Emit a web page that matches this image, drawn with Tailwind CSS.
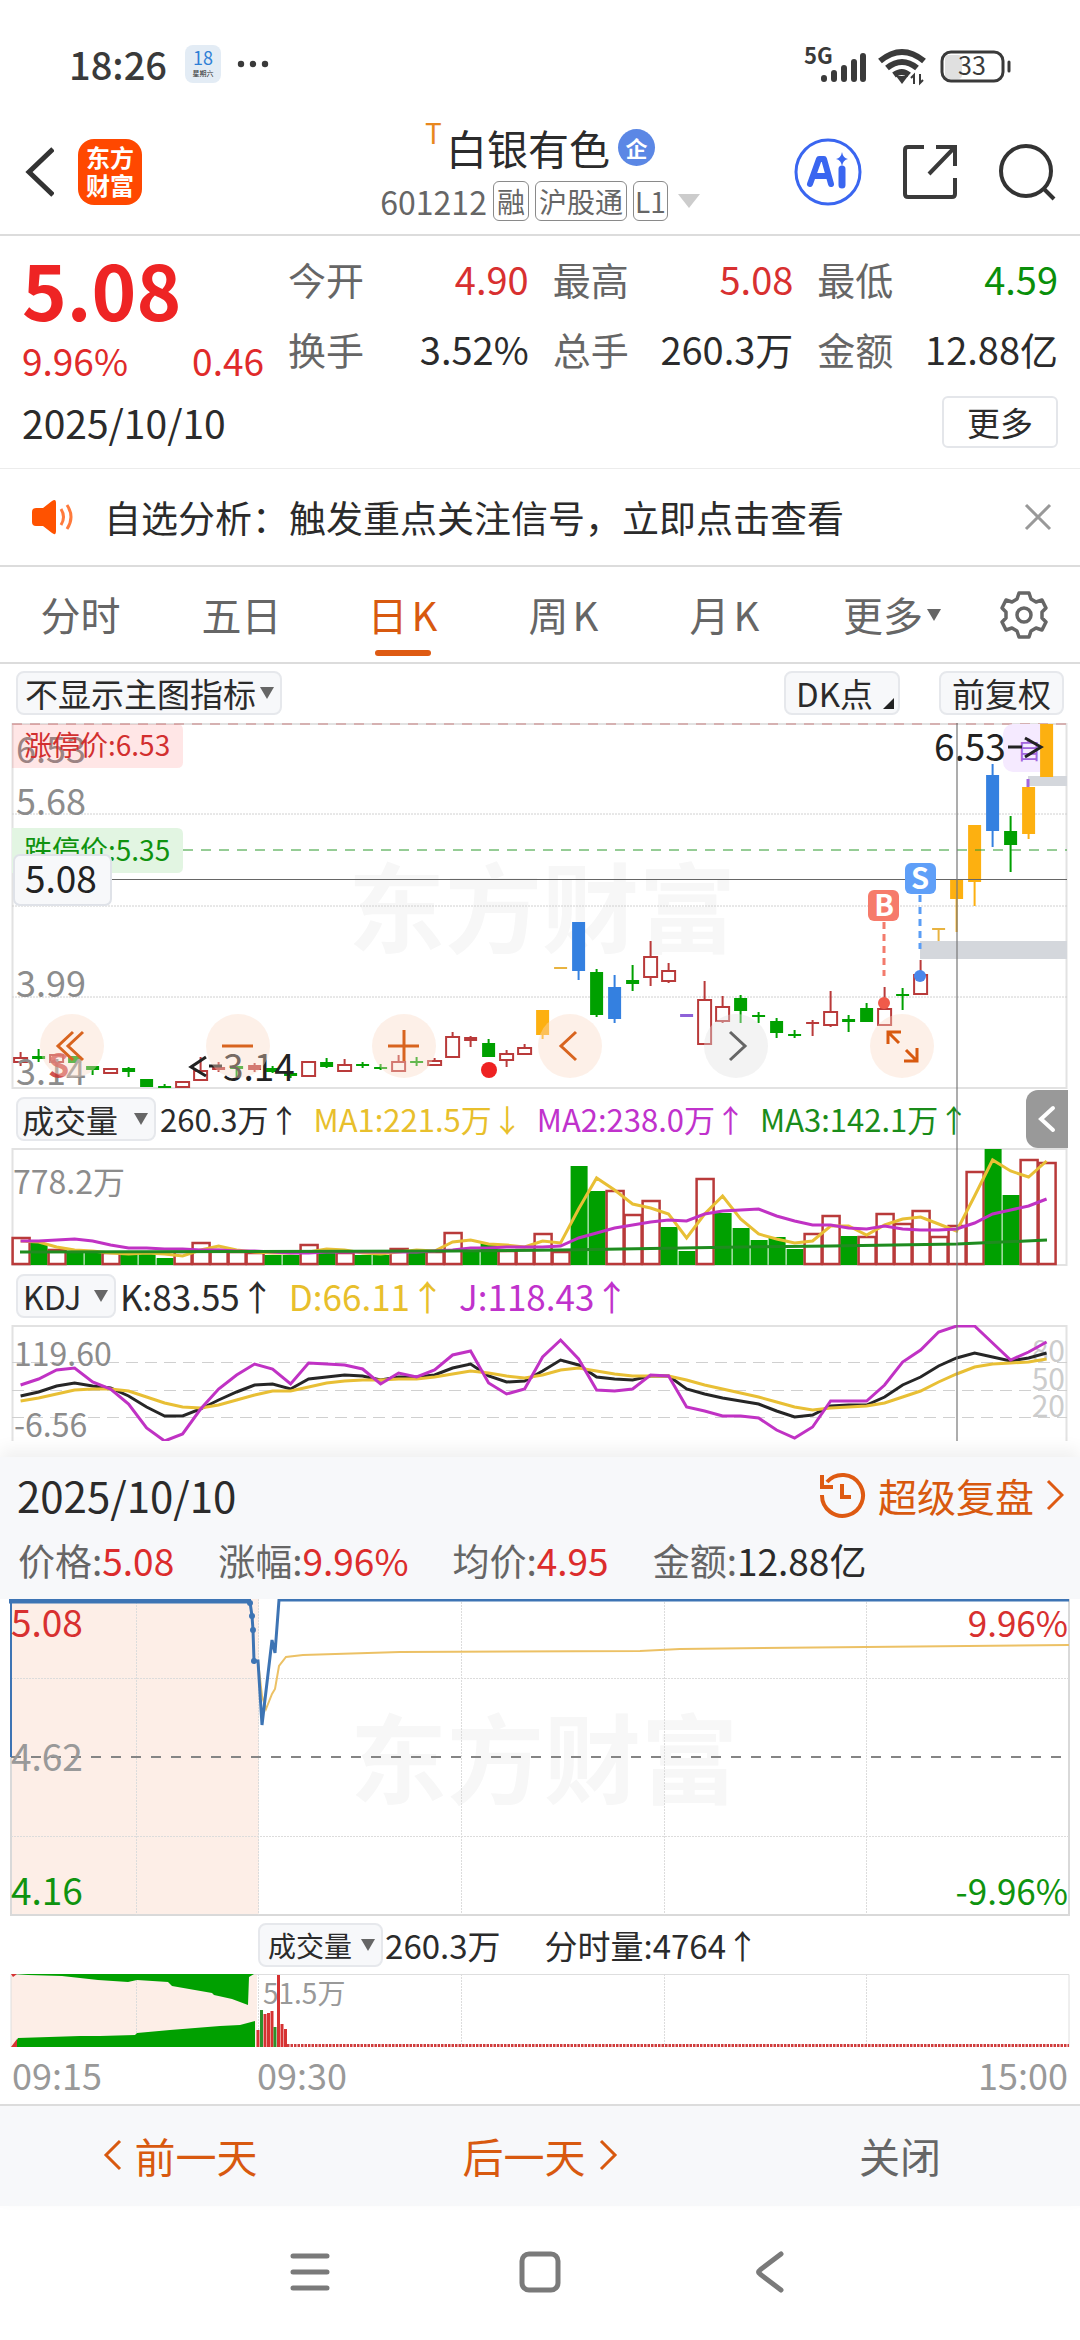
<!DOCTYPE html>
<html lang="zh-CN">
<head>
    <meta charset="UTF-8">
    <meta name="viewport" content="width=device-width, initial-scale=1.0">
    <title>白银有色 601212</title>
    <script src="https://cdn.jsdelivr.net/npm/@tailwindcss/browser@4"></script>
</head>
<body class="bg-white text-[#2b2b2b] font-['Noto_Sans_CJK_SC',sans-serif]">

    <!-- Status bar -->
    <div class="flex items-center justify-between pl-[69px] pr-[68px] pt-[34px] pb-6">
        <div class="flex items-center">
            <span class="text-[38px] leading-[60px] font-medium text-[#3a3a3a]">18:26</span>
            <div class="ml-[18px] w-9 h-[38px] rounded-lg bg-[#e3ecf5] text-center">
                <div class="text-[18px] leading-[24px] text-[#2f7fd6]">18</div>
                <div class="text-[7px] leading-[8px]">星期六</div>
            </div>
            <svg class="ml-4 w-8 h-2" viewBox="0 0 32 8" fill="#3a3a3a"><circle cx="4" cy="4" r="3.2"/><circle cx="16" cy="4" r="3.2"/><circle cx="28" cy="4" r="3.2"/></svg>
        </div>
        <svg class="w-[208px] h-11" viewBox="804 42 208 44" fill="none">
            <text x="804" y="64" font-size="22" font-weight="700" fill="#3a3a3a">5G</text>
            <g stroke="#3a3a3a" stroke-width="6" stroke-linecap="round">
                <path d="M824 79v-1M834 79v-6M844 79v-11M854 79v-17M863 79v-23"/>
            </g>
            <g stroke="#3a3a3a" stroke-width="6" fill="none">
                <path d="M880 61q22-18 44 0M887 68q15-12 30 0M894 75q8-6 15 0"/>
            </g>
            <path d="M896 76h12l-6 8z" fill="#3a3a3a"/>
            <path d="M914 84v-9l-3 3M920 74v9l3-3" stroke="#3a3a3a" stroke-width="2"/>
            <rect x="945" y="55" width="17" height="24" rx="4" fill="#e0e0e0"/>
            <rect x="942" y="52" width="61" height="29" rx="9" stroke="#3a3a3a" stroke-width="3"/>
            <path d="M1009 62v9" stroke="#3a3a3a" stroke-width="3" stroke-linecap="round"/>
            <text x="972" y="75" font-size="25" text-anchor="middle" fill="#3a3a3a">33</text>
        </svg>
    </div>

    <!-- Title bar -->
    <header class="flex items-center justify-between border-b-2 border-[#dcdcdc] pl-6 pr-6 pb-2">
        <div class="flex items-center gap-6 w-[260px]">
            <button type="button" aria-label="返回">
                <svg class="w-[30px] h-14" viewBox="0 0 30 56" fill="none" stroke="#333" stroke-width="5"><path d="M29 5L5 28l24 23"/></svg>
            </button>
            <div class="w-16 h-[66px] rounded-2xl bg-[#ff4800] text-white font-bold text-[24px] leading-[28px] text-center pt-1">东方<br>财富</div>
        </div>
        <div class="flex flex-col items-center">
            <div class="flex items-center">
                <span class="text-[28px] leading-[28px] text-[#e8871e] self-start">T</span>
                <h1 class="ml-1 text-[41px] leading-[58px]">白银有色</h1>
                <span class="ml-2 w-[37px] h-[37px] rounded-full bg-[#5b87e5] text-white text-[22px] leading-[36px] font-bold text-center">企</span>
            </div>
            <div class="flex items-center gap-[6px] text-[28px] leading-[38px] text-[#666]">
                <span class="text-[32px] leading-[50px]">601212</span>
                <span class="border border-[#8a8a8a] rounded-md px-[3px]">融</span>
                <span class="border border-[#8a8a8a] rounded-md px-[3px]">沪股通</span>
                <span class="border border-[#8a8a8a] rounded-md px-[1px]">L1</span>
                <svg class="ml-1 w-[22px] h-4" viewBox="0 0 22 16" fill="#ccc"><path d="M0 1h22L11 15z"/></svg>
            </div>
        </div>
        <div class="flex items-center justify-end gap-10 w-[260px]">
            <button type="button" aria-label="AI">
                <svg class="w-[68px] h-[68px]" viewBox="0 0 68 68" fill="none">
                    <circle cx="34" cy="34" r="32" stroke="#3a66f0" stroke-width="3"/>
                    <path d="M16 46L25 21h5l7 25M20 38h13" stroke="#3a66f0" stroke-width="6" stroke-linecap="round" stroke-linejoin="round"/>
                    <path d="M48 31v16" stroke="#3a66f0" stroke-width="7" stroke-linecap="round"/>
                    <path d="M48 14q1 6 6 7q-5 1-6 7q-1-6-6-7q5-1 6-7z" fill="#3a66f0"/>
                </svg>
            </button>
            <button type="button" aria-label="分享">
                <svg class="w-14 h-14" viewBox="0 0 56 56" fill="none" stroke="#3a3a3a" stroke-width="4"><path d="M22 3H6q-3 0-3 3v44q0 3 3 3h44q3 0 3-3V34M34 3h19v19M53 3L27 30"/></svg>
            </button>
            <button type="button" aria-label="搜索">
                <svg class="w-[58px] h-[58px]" viewBox="0 0 58 58" fill="none" stroke="#333" stroke-width="4"><circle cx="28" cy="28" r="25"/><path d="M46 46l10 10"/></svg>
            </button>
        </div>
    </header>

    <!-- Quote -->
    <section class="border-b border-[#ececec] px-[22px] pt-1 pb-5">
        <div class="flex gap-6">
            <div class="w-[242px] text-[#e02a2a]">
                <div class="text-[76px] leading-[96px] font-bold text-[#ee2424]">5.08</div>
                <div class="flex justify-between text-[37px] leading-[48px]"><span>9.96%</span><span>0.46</span></div>
            </div>
            <dl class="flex-1 grid grid-cols-3 gap-x-6 pt-1 text-[38px] leading-[70px] text-[#666] whitespace-nowrap">
                <div class="flex justify-between"><dt>今开</dt><dd class="text-[#d83030]">4.90</dd></div>
                <div class="flex justify-between"><dt>最高</dt><dd class="text-[#d83030]">5.08</dd></div>
                <div class="flex justify-between"><dt>最低</dt><dd class="text-[#0a8f0a]">4.59</dd></div>
                <div class="flex justify-between"><dt>换手</dt><dd class="text-[#2b2b2b]">3.52%</dd></div>
                <div class="flex justify-between"><dt>总手</dt><dd class="text-[#2b2b2b]">260.3万</dd></div>
                <div class="flex justify-between"><dt>金额</dt><dd class="text-[#2b2b2b]">12.88亿</dd></div>
            </dl>
        </div>
        <div class="flex items-center justify-between mt-3">
            <span class="text-[39px] leading-[50px]">2025/10/10</span>
            <button type="button" class="border-2 border-[#e4e6ea] rounded-md px-[23px] text-[33px] leading-[48px]">更多</button>
        </div>
    </section>

    <!-- Notice -->
    <section class="flex items-center border-b-2 border-[#dcdcdc] pl-8 pr-7">
        <svg class="w-11 h-9" viewBox="0 0 44 36"><path d="M0 13q0-4 4-4h7L20 2q4-3 4 2v28q0 5-4 2l-9-7H4q-4 0-4-4z" fill="#ff5200"/><path d="M29 10q5 8 0 16M35 6q8 12 0 24" fill="none" stroke="#ff7a3c" stroke-width="3"/></svg>
        <a href="#" class="flex-1 ml-7 text-[37px] leading-[96px]">自选分析：触发重点关注信号，立即点击查看</a>
        <button type="button" aria-label="关闭提示">
            <svg class="w-7 h-7" viewBox="0 0 28 28" stroke="#999" stroke-width="3"><path d="M2 2l24 24M26 2L2 26"/></svg>
        </button>
    </section>

    <!-- Period tabs -->
    <nav class="grid grid-cols-[161fr_161fr_161fr_161fr_161fr_170fr_97fr] border-b-2 border-[#dcdcdc] pr-2 text-[40px] leading-[95px] text-[#666]">
        <button type="button">分时</button>
        <button type="button">五日</button>
        <button type="button" class="relative text-[#d8590f]">日<span class="ml-1">K</span><span class="absolute bottom-[6px] left-1/2 -translate-x-1/2 w-14 h-[6px] rounded-full bg-[#de5a12]"></span></button>
        <button type="button">周<span class="ml-1">K</span></button>
        <button type="button">月<span class="ml-1">K</span></button>
        <button type="button" class="flex items-center justify-center gap-1 pl-1">更多<svg class="w-[14px] h-3" viewBox="0 0 14 12" fill="#666"><path d="M0 0h14L7 12z"/></svg></button>
        <button type="button" aria-label="设置" class="flex items-center justify-center">
            <svg class="w-12 h-12" viewBox="0 0 48 48" fill="none" stroke="#666" stroke-width="3.5" stroke-linejoin="round"><path d="M19 2h10l2 6 5 3 6-2 4 8-4 4v6l4 4-4 8-6-2-5 3-2 6H19l-2-6-5-3-6 2-4-8 4-4v-6l-4-4 4-8 6 2 5-3z"/><circle cx="24" cy="24" r="7"/></svg>
        </button>
    </nav>

    <main class="relative pb-4">
        <div class="flex items-center px-4 pt-[7px] pb-2">
            <label class="relative flex items-center">
                <select aria-label="主图指标" class="appearance-none border-2 border-[#e6e8ec] rounded-lg bg-[#f7f8fa] pl-[7px] pr-6 text-[33px] leading-[40px]"><option>不显示主图指标</option></select>
                <svg class="absolute right-2 w-[14px] h-3 pointer-events-none" viewBox="0 0 14 12" fill="#666"><path d="M0 0h14L7 12z"/></svg>
            </label>
            <button type="button" class="ml-auto mr-[39px] flex items-center border-2 border-[#e6e8ec] rounded-lg bg-[#f7f8fa] pl-[10px] pr-1 text-[33px] leading-[40px]">DK点<svg class="ml-[10px] w-[11px] h-[11px] self-end mb-1" viewBox="0 0 11 11"><path d="M11 0v11H0z" fill="#222"/></svg></button>
            <button type="button" class="border-2 border-[#e6e8ec] rounded-lg bg-[#f7f8fa] px-[11px] text-[33px] leading-[40px]">前复权</button>
        </div>

        <!-- Daily candles -->
        <div class="relative">
            <svg class="block w-full" viewBox="0 0 1080 366" fill="none">
                <text x="348" y="222" font-size="97" font-weight="700" fill="#f7f7f7">东方财富</text>
                <rect x="12.5" y="1" width="1054" height="364" stroke="#e2e2e2" stroke-width="2"/>
                <path d="M12 91h1055M12 183h1055M12 274h1055" stroke="#d0d0d0" stroke-dasharray="2 1"/>
                <path d="M12 1h1055" stroke="#c98080" stroke-dasharray="10 8"/>
                <path d="M920 227h147" stroke="#d4d7dc" stroke-width="18"/>
                <path d="M1028 58h39" stroke="#d4d7dc" stroke-width="10"/>
                <rect x="1003" y="1" width="50" height="48" rx="10" fill="#f5eaff"/>
                <text x="1017" y="36" font-size="24" fill="#a266dd">自</text>
                <g id="candles"></g>
                <path d="M1028 56v8" stroke="#a266dd" stroke-width="3"/>
                <circle cx="489" cy="347" r="8" fill="#ee2222"/>

                <g font-size="36" fill="#8c8c8c">
                    <text x="16" y="40">6.53</text>
                    <text x="16" y="92">5.68</text>
                    <text x="16" y="183">4.84</text>
                    <text x="16" y="274">3.99</text>
                    <text x="16" y="362">3.14</text>
                </g>
                <text x="48" y="355" font-size="34" font-weight="700" fill="#c83232" fill-opacity=".85">S</text>
                <path d="M12 1h165q6 0 6 6v32q0 6-6 6H12z" fill="#ff5050" fill-opacity=".14"/>
                <text x="24" y="33" font-size="28" fill="#d22f2f">涨停价:6.53</text>
                <path d="M12 105h165q6 0 6 6v33q0 6-6 6H12z" fill="#e2f5e2"/>
                <text x="24" y="138" font-size="28" fill="#0f930f">跌停价:5.35</text>
                <path d="M183 127h884" stroke="#2c9a2c" stroke-dasharray="10 8"/>
                <path d="M111 156.500h956" stroke="#666"/>
                <rect x="14" y="132" width="97" height="50" rx="6" fill="#f7f8fa" stroke="#dfe2e8" stroke-width="2"/>
                <text x="25" y="170" font-size="37" fill="#222">5.08</text>

                <g stroke-width="3" stroke-dasharray="7 5">
                    <path d="M884 199v54" stroke="#f37b6c"/>
                    <path d="M920 172v54" stroke="#5a9df5"/>
                </g>
                <rect x="868" y="167" width="31" height="31" rx="6" fill="#f67b6b"/>
                <rect x="905" y="140" width="31" height="31" rx="6" fill="#5f9ff8"/>
                <g font-size="29" font-weight="700" fill="#fff" text-anchor="middle">
                    <text x="884" y="193">B</text>
                    <text x="920" y="166">S</text>
                </g>
                <circle cx="884" cy="280" r="6" fill="#f05a4a"/>
                <circle cx="920" cy="253" r="6" fill="#4a86ea"/>

                <g font-size="37" fill="#222">
                    <text x="934" y="38">6.53</text>
                    <text x="223" y="358">3.14</text>
                </g>
                <path d="M1008 24h14M1025 15l16 9-16 10M222 343h-13M206 334l-15 10 15 9" stroke="#222" stroke-width="3"/>
            </svg>
            <div class="absolute inset-x-0 bottom-[11px] flex justify-between pl-10 pr-[146px]">
                <button type="button" aria-label="最早" class="w-16 h-16 rounded-full bg-[#fbd9c6]/40"><svg viewBox="0 0 64 64" fill="none" stroke="#d8641f" stroke-width="3"><path d="M33 18L18 32l15 14M43 18L28 32l15 14"/></svg></button>
                <button type="button" aria-label="缩小" class="w-16 h-16 rounded-full bg-[#fbd9c6]/40"><svg viewBox="0 0 64 64" fill="none" stroke="#d8641f" stroke-width="3"><path d="M16 32h31"/></svg></button>
                <button type="button" aria-label="放大" class="w-16 h-16 rounded-full bg-[#fbd9c6]/40"><svg viewBox="0 0 64 64" fill="none" stroke="#d8641f" stroke-width="3"><path d="M16 32h31M32 16v31"/></svg></button>
                <button type="button" aria-label="左移" class="w-16 h-16 rounded-full bg-[#fbd9c6]/40"><svg viewBox="0 0 64 64" fill="none" stroke="#d8641f" stroke-width="3"><path d="M38 18L23 32l15 14"/></svg></button>
                <button type="button" aria-label="右移" class="w-16 h-16 rounded-full bg-[#e0e0e0]/40"><svg viewBox="0 0 64 64" fill="none" stroke="#666" stroke-width="3"><path d="M26 18l15 14-15 14"/></svg></button>
                <button type="button" aria-label="全屏" class="w-16 h-16 rounded-full bg-[#fbd9c6]/40"><svg viewBox="0 0 64 64" fill="none" stroke="#d8590f" stroke-width="3"><path d="M18 30V18h13M18 18l11 11M47 34v13H34M47 47L36 36"/></svg></button>
            </div>
        </div>

        <!-- Volume -->
        <div class="flex items-center gap-[14px] pl-4 text-[31px] leading-[59px] whitespace-nowrap">
            <label class="relative flex items-center">
                <select aria-label="副图一" class="appearance-none border-2 border-[#e6e8ec] rounded-lg bg-[#f7f8fa] pl-[4px] pr-[35px] text-[32px] leading-[40px]"><option>成交量</option></select>
                <svg class="absolute right-2 w-[14px] h-3 pointer-events-none" viewBox="0 0 14 12" fill="#666"><path d="M0 0h14L7 12z"/></svg>
            </label>
            <span class="-ml-[10px]">260.3万↑</span>
            <span class="text-[#e8bf2c]">MA1:221.5万↓</span>
            <span class="text-[#c032cc]">MA2:238.0万↑</span>
            <span class="text-[#1a8c1a]">MA3:142.1万↑</span>
            <button type="button" aria-label="展开" class="ml-auto mr-[12px] w-[42px] h-[58px] rounded-l-xl bg-[#999] flex items-center justify-center">
                <svg class="w-5 h-8" viewBox="0 0 20 32" fill="none" stroke="#fff" stroke-width="4" stroke-linecap="round"><path d="M16 5L4 16l12 11"/></svg>
            </button>
        </div>
        <svg class="block w-full" viewBox="0 0 1080 118" fill="none">
            <rect x="12.500" y="1" width="1054" height="116" stroke="#e2e2e2" stroke-width="2"/>
            <text x="13" y="46" font-size="32" fill="#8c8c8c">778.2万</text>
            <g id="volumes"></g>
            <polyline id="ma1" stroke="#e8bf35" stroke-width="3"/>
            <polyline id="ma2" stroke="#c032c4" stroke-width="3"/>
            <polyline points="20,104 453,103 561,102 741,99 831,98 957,96 1047,92" stroke="#1f8c1f" stroke-width="3"/>
        </svg>

        <!-- KDJ -->
        <div class="flex items-center gap-[14px] pl-4 text-[35px] leading-[59px] whitespace-nowrap">
            <label class="relative flex items-center">
                <select aria-label="副图二" class="appearance-none border-2 border-[#e6e8ec] rounded-lg bg-[#f7f8fa] pl-[5px] pr-8 text-[32px] leading-[40px]"><option>KDJ</option></select>
                <svg class="absolute right-2 w-[14px] h-3 pointer-events-none" viewBox="0 0 14 12" fill="#666"><path d="M0 0h14L7 12z"/></svg>
            </label>
            <span class="-ml-[10px]">K:83.55↑</span>
            <span class="text-[#e8bf2c]">D:66.11↑</span>
            <span class="text-[#c032cc]">J:118.43↑</span>
        </div>
        <svg class="block w-full" viewBox="0 0 1080 116" fill="none">
            <path d="M12.500 116V1h1054v115" stroke="#e2e2e2" stroke-width="2"/>
            <path d="M12 37.500h1055M12 65.500h1055M12 92.500h1055" stroke="#d0d0d0" stroke-dasharray="12 7"/>
            <g font-size="32" fill="#8c8c8c"><text x="14" y="41">119.60</text><text x="14" y="112">-6.56</text></g>
            <g font-size="30" fill="#ccc" text-anchor="end"><text x="1065" y="37">80</text><text x="1065" y="65">50</text><text x="1065" y="92">20</text></g>
            <polyline id="k" stroke="#262626" stroke-width="3"/>
            <polyline id="d" stroke="#e8bf35" stroke-width="3"/>
            <polyline id="j" stroke="#c032c4" stroke-width="3"/>
        </svg>
        <div class="absolute left-[88.5%] top-[59px] bottom-4 w-[2px] bg-[#777]/60"></div>
    </main>

    <!-- Replay of one day -->
    <section class="relative bg-[#f7f8fa] shadow-[0_-8px_16px_rgba(0,0,0,0.06)]">
        <div class="flex items-center justify-between pl-[17px] pr-4 pt-1">
            <h2 class="text-[42px] leading-[68px]">2025/10/10</h2>
            <a href="#" class="flex items-center text-[39px] leading-[68px] text-[#d8590f]">
                <svg class="w-12 h-12 mr-3" viewBox="0 0 48 48" fill="none" stroke="#de5a12" stroke-width="4"><path d="M4 24a20.500 20.500 0 1 0 5-13M4 4v12h11M24 13v13h9"/></svg>超级复盘
                <svg class="w-[18px] h-8 ml-3" viewBox="0 0 18 32" fill="none" stroke="#de5a12" stroke-width="3"><path d="M2 2l14 14L2 30"/></svg>
            </a>
        </div>
        <div class="flex gap-11 px-[18px] pb-2 text-[37px] leading-[62px] text-[#666]">
            <span>价格:<b class="font-normal text-[#dc2c2c]">5.08</b></span>
            <span>涨幅:<b class="font-normal text-[#dc2c2c]">9.96%</b></span>
            <span>均价:<b class="font-normal text-[#dc2c2c]">4.95</b></span>
            <span>金额:<b class="font-normal text-[#2b2b2b]">12.88亿</b></span>
        </div>

        <div class="bg-white">
            <svg class="block w-full" viewBox="0 0 1080 317" fill="none">
                <text x="350" y="197" font-size="97" font-weight="700" fill="#f7f7f7">东方财富</text>
                <rect x="11" y="0" width="248" height="316" fill="#fdeee7"/>
                <path d="M11 0v316h1058V0" stroke="#d9d9d9" stroke-width="2"/>
                <path d="M136.500 0v316M258.500 0v316M461.500 0v316M664.500 0v316M866.500 0v316M11 79.500h1058M11 237.500h1058" stroke="#dcdcdc" stroke-dasharray="2 1"/>
                <path d="M11 158h1058" stroke="#858585" stroke-width="2" stroke-dasharray="10 10"/>
                <path d="M258 62l4 35 4 13 6-15 3-5 4-23 7-9 17-2 97-3 240-1 40-2 186-2 203-2" stroke="#ecc165" stroke-width="2"/>
                <path d="M11 158V3" stroke="#3d74b4" stroke-width="2"/>
                <path d="M9 2h242" stroke="#3d74b4" stroke-width="5"/>
                <path d="M250 3l2 14 1 14 1 31h4l4 64 10-85 3 13 4-53h790" stroke="#3d74b4" stroke-width="3"/>
                <g fill="#3d74b4"><circle cx="250" cy="4" r="3"/><circle cx="252" cy="17" r="3"/><circle cx="253" cy="31" r="3"/><circle cx="254" cy="62" r="3"/></g>
                <g font-size="37">
                    <text x="11" y="38" fill="#d83030">5.08</text>
                    <text x="11" y="172" fill="#999">4.62</text>
                    <text x="11" y="306" fill="#0f930f">4.16</text>
                </g>
                <g font-size="35" text-anchor="end">
                    <text x="1068" y="38" fill="#d83030">9.96%</text>
                    <text x="1068" y="306" fill="#0f930f">-9.96%</text>
                </g>
            </svg>
            <div class="flex items-center pl-[23.9%] text-[33px] leading-[58px] whitespace-nowrap">
                <label class="relative flex items-center">
                    <select aria-label="分时副图" class="appearance-none border-2 border-[#e6e8ec] rounded-lg bg-[#f7f8fa] pl-2 pr-7 text-[28px] leading-[40px]"><option>成交量</option></select>
                    <svg class="absolute right-2 w-[14px] h-3 pointer-events-none" viewBox="0 0 14 12" fill="#666"><path d="M0 0h14L7 12z"/></svg>
                </label>
                <span class="ml-[2px]">260.3万</span>
                <span class="ml-11">分时量:4764↑</span>
            </div>
            <svg class="block w-full" viewBox="0 0 1080 74" fill="none">
                <rect x="11" y="0" width="246" height="73" fill="#fdeee7"/>
                <path d="M11 73V.5h1058V73" stroke="#dedede"/>
                <path d="M136.500 0v73M258.500 0v73M461.500 0v73M664.500 0v73M866.500 0v73" stroke="#dcdcdc" stroke-dasharray="2 1"/>
                <path d="M14 0l14 1 34 1 36 4 30 2 9-2 31 2 4 4 40 7 2 2 18 4 16 6 1-28 5-3zM13 73l5-9 62-2h20l35-1 2-2 33-3 50-4 20-1 15-4v26z" fill="#00a000"/>
                <path d="M11 0h6l-4 3zM11 73l6-8v8z" fill="#d63232"/>
                <text x="263" y="30" font-size="28" fill="#999">51.5万</text>
                <g stroke-width="3">
                    <path d="M258 73V56M265 73V40M268.500 73V39M272 73V37M278.500 73V1M282 73V50M285.500 73V55" stroke="#d63232"/>
                    <path d="M261.500 73V36M275 73V53" stroke="#2c922c"/>
                    <path d="M287 71.500h782" stroke="#cf3d3d" stroke-dasharray="2.500 1"/>
                </g>
            </svg>
            <div class="flex px-3 pb-1 text-[36px] leading-[52px] text-[#999]">
                <span class="w-[23.2%]">09:15</span><span>09:30</span><span class="ml-auto">15:00</span>
            </div>
        </div>

        <div class="grid grid-cols-3 border-t-2 border-[#dcdcdc] text-[41px] leading-[98px] pb-[2px] text-[#d8590f]">
            <button type="button" class="flex items-center justify-center gap-3"><svg class="w-5 h-8" viewBox="0 0 20 32" fill="none" stroke="#d8590f" stroke-width="3"><path d="M17 2L3 16l14 14"/></svg>前一天</button>
            <button type="button" class="flex items-center justify-center gap-3">后一天<svg class="w-5 h-8" viewBox="0 0 20 32" fill="none" stroke="#d8590f" stroke-width="3"><path d="M3 2l14 14L3 30"/></svg></button>
            <button type="button" class="text-[#666]">关闭</button>
        </div>
    </section>

    <!-- System navigation -->
    <div class="flex justify-center items-center gap-[186px] py-11">
        <button type="button" aria-label="最近任务"><svg class="w-11 h-11" viewBox="0 0 44 44" stroke="#7a7a7a" stroke-width="5" stroke-linecap="round"><path d="M5 6h34M5 22h34M5 38h34"/></svg></button>
        <button type="button" aria-label="主屏幕"><svg class="w-11 h-11" viewBox="0 0 44 44" fill="none" stroke="#7a7a7a" stroke-width="5"><rect x="4" y="4" width="36" height="36" rx="7"/></svg></button>
        <button type="button" aria-label="返回"><svg class="w-11 h-11" viewBox="0 0 44 44" fill="none" stroke="#7a7a7a" stroke-width="5" stroke-linecap="round"><path d="M33 4L12 20q-3 2 0 4l21 16"/></svg></button>
    </div>

    <script>
        const COLORS = { r: '#b93a3a', f: '#b93a3a', g: '#00a000', o: '#fdb010', b: '#3480e0', p: '#8e62d8', y: '#e8b340' };
        const STEP = 18;
        const x = (i) => 20.6 + i * STEP;

        // [kind, body top, body bottom, high, low], r = hollow red
        const candles = [
            ['r',334,339,329,343],['g',333,336,326,339],['r',331,339,331,339],['g',333,340,333,340],['g',343,347,343,352],
            ['r',345,350,345,350],['g',345,349,344,354],['g',356,364,356,364],['g',363,365,361,365],['r',358,364,358,364],
            ['r',347,357,334,357],['f',344,347,339,349],['g',343,346,343,354],['f',342,347,340,349],['g',345,349,343,350],
            ['g',350,353,349,355],['r',338,353,338,353],['g',339,344,335,345],['r',341,348,336,348],['g',341,343,339,345],
            ['g',344,346,341,347],['r',338,348,332,348],['g',338,340,334,343],['r',337,342,335,342],['r',313,334,309,334],
            ['f',314,318,313,324],['g',320,334,316,334],['r',330,337,327,344],['r',324,331,321,331],['o',287,312,287,316],
            ['y',244,246,244,246],['b',199,248,199,257],['g',249,292,246,294],['b',264,296,252,300],['g',257,261,242,268],
            ['r',233,254,218,263],['r',247,258,240,260],['p',291,294,291,294],['r',276,321,258,321],['r',283,298,273,300],
            ['g',275,288,272,300],['g',292,294,289,300],['g',298,310,295,315],['g',311,313,307,315],['f',299,301,297,313],
            ['r',288,302,268,304],['g',296,299,292,309],['g',285,299,280,299],['r',285,302,264,302],['g',271,273,265,287],
            ['r',251,271,237,271],['y',205,207,205,218],['o',157,176,157,209],['o',102,159,102,183],['b',52,108,41,124],
            ['g',108,122,93,149],['o',64,111,64,116],['o',1,54,1,54]
        ];
        document.getElementById('candles').innerHTML = candles.map(([kind, top, bottom, high, low], i) => {
            const c = COLORS[kind];
            const wick = `<path d="M${x(i)} ${high}V${top}M${x(i)} ${bottom}V${low}" stroke="${c}" stroke-width="2"/>`;
            const body = kind === 'r'
                ? `<rect x="${x(i) - 6.5}" y="${top + 1}" width="13" height="${bottom - top - 1}" stroke="${c}" stroke-width="2"/>`
                : `<rect x="${x(i) - 6.5}" y="${top}" width="13" height="${bottom - top}" fill="${c}"/>`;
            return wick + body;
        }).join('');

        const volumes = 'r90 g95 r102 g103 g104 r105 g107 g106 g110 r104 r95 r102 r104 r105 g107 g107 r97 g104 r105 g107 g107 r101 g105 r104 r85 g102 g95 r103 r102 r86 r104 g18 g43 r43 r67 r53 g79 g103 r31 g65 g80 g92 g89 g101 r86 r68 g88 r89 r66 r76 r63 r89 r78 r24 g1 g47 r12 r15'.split(' ');
        document.getElementById('volumes').innerHTML = volumes.map((v, i) => {
            const top = Number(v.slice(1));
            return v[0] === 'r'
                ? `<rect x="${x(i) - 8}" y="${top}" width="17" height="${116 - top}" stroke="${COLORS.r}" stroke-width="2.5"/>`
                : `<rect x="${x(i) - 8}" y="${top}" width="17" height="${117 - top}" fill="${COLORS.g}"/>`;
        }).join('');

        const lines = {
            ma1: [93,94,99,102,103,105,106,105,106,108,102,98,102,104,105,105,104,101,102,105,106,104,102,103,94,92,96,97,99,93,95,61,30,42,56,60,66,90,66,48,71,86,91,95,93,78,78,87,77,71,69,76,83,48,12,23,29,13],
            ma2: [93,93,92,91,93,97,100,100,101,101,102,102,103,103,104,105,105,104,104,104,104,104,104,103,102,100,100,99,99,99,98,90,85,80,77,74,72,73,66,63,62,61,68,73,77,77,80,81,78,81,82,82,81,75,66,62,58,51],
            k: [71,67,61,58,61,63,71,82,91,91,84,75,67,60,59,64,54,52,50,51,55,52,52,50,43,39,51,57,56,46,35,40,52,54,55,51,51,64,69,73,76,79,86,92,90,81,80,80,72,60,52,41,33,28,32,36,33,28],
            d: [76,73,69,65,64,64,66,72,78,82,83,80,75,70,66,66,62,58,56,55,55,54,54,52,49,46,48,51,53,50,45,43,46,49,51,51,51,55,60,64,68,72,77,82,85,83,82,81,78,72,66,57,49,42,39,38,37,34],
            j: [60,54,45,43,57,64,79,103,116,109,84,64,50,39,44,59,38,39,40,44,59,48,52,45,30,26,58,69,64,32,15,34,65,66,64,50,51,82,86,91,91,93,105,113,102,76,76,76,60,37,25,7,1,1,18,35,27,17]
        };
        for (const id in lines) {
            document.getElementById(id).setAttribute('points', lines[id].map((y, i) => `${x(i)},${y}`).join(' '));
        }
    </script>
</body>
</html>
